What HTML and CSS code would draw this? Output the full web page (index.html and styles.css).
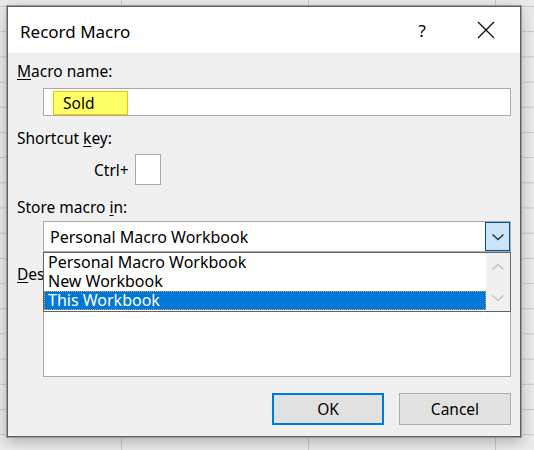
FILE: index.html
```html
<!DOCTYPE html>
<html lang="en">
<head>
  <meta charset="UTF-8">
  <meta name="viewport" content="width=device-width, initial-scale=1.0">
  <title>Record Macro</title>
  <link rel="stylesheet" href="styles.css">
</head>
<body>
  <div class="dialog">
    <div class="titlebar">
      <span class="title">Record Macro</span>
      <span class="help">?</span>
      <svg class="close" width="18" height="18" viewBox="0 0 18 18">
        <path d="M1 1 L17 17 M17 1 L1 17" stroke="#111" stroke-width="1.3" fill="none"/>
      </svg>
    </div>

    <div class="content">
      <label class="lbl"><u>M</u>acro name:</label>
      <div class="field name-field">
        <span class="highlight">Sold</span>
      </div>

      <label class="lbl lbl-gap">Shortcut <u>k</u>ey:</label>
      <div class="shortcut">
        <span>Ctrl+</span>
        <div class="keybox"></div>
      </div>

      <label class="lbl lbl-gap">Store macro <u>i</u>n:</label>
      <div class="combo-wrap">
        <div class="combo">
          <span class="combo-text">Personal Macro Workbook</span>
          <div class="combo-btn">
            <svg width="14" height="10" viewBox="0 0 14 10">
              <path d="M1.5 2.5 L7 7.5 L12.5 2.5" stroke="#333" stroke-width="1.5" fill="none"/>
            </svg>
          </div>
        </div>
        <div class="droplist">
          <ul class="options">
            <li>Personal Macro Workbook</li>
            <li>New Workbook</li>
            <li class="selected">This Workbook</li>
          </ul>
          <div class="scrollbar">
            <svg width="14" height="10" viewBox="0 0 14 10">
              <path d="M1.5 7.5 L7 2.5 L12.5 7.5" stroke="#c4c4c4" stroke-width="1.6" fill="none"/>
            </svg>
            <svg width="14" height="10" viewBox="0 0 14 10">
              <path d="M1.5 2.5 L7 7.5 L12.5 2.5" stroke="#c4c4c4" stroke-width="1.6" fill="none"/>
            </svg>
          </div>
        </div>
      </div>

      <label class="lbl lbl-gap lbl-clipped"><u>D</u>es</label>
      <div class="field description"></div>

      <div class="buttons">
        <button class="btn btn-default">OK</button>
        <button class="btn">Cancel</button>
      </div>
    </div>
  </div>
</body>
</html>
```

FILE: styles.css
```css
body {
  margin: 0;
  width: 534px;
  height: 450px;
  overflow: hidden;
  font-family: "Noto Sans", "Open Sans", sans-serif;
  font-size: 15.5px;
  color: #000;
  background-color: #ebebeb;
  background-image:
    linear-gradient(to right, #c8c8c8 1px, transparent 1px),
    linear-gradient(to bottom, #c8c8c8 1px, transparent 1px);
  background-size: 187px 450px, 534px 25.2px;
  background-position: 121px 0, 0 6px;
  padding: 6px 0 0 7px;
  box-sizing: border-box;
}
.dialog {
  width: 514px;
  height: 431px;
  box-sizing: border-box;
  border: 1px solid #5f5f5f;
  box-shadow: 0 0 0 1px #9a9a9a, 0 4px 14px rgba(0, 0, 0, 0.28);
  background: #f0f0f0;
  display: flex;
  flex-direction: column;
}
.titlebar {
  height: 46px;
  background: #fff;
  display: flex;
  align-items: center;
  padding: 0 0 0 12px;
  flex-shrink: 0;
}
.title {
  font-size: 17px;
  flex: 1;
  margin-top: 2px;
}
.help {
  font-size: 17px;
  margin-right: 51px;
  margin-top: 1px;
}
.close {
  margin-right: 25px;
}
.content {
  padding: 8px 9px 0 9px;
  display: flex;
  flex-direction: column;
}
.lbl {
  display: block;
  line-height: 20px;
  height: 20px;
}
.lbl u {
  text-decoration-thickness: 1px;
  text-underline-offset: 2px;
}
.lbl-gap {
  margin-top: 12px;
}
.field {
  margin: 7px 0 0 26px;
  background: #fff;
  border: 1px solid #a9a9a9;
  box-sizing: border-box;
}
.name-field {
  height: 28px;
  padding: 2px 0 0 9px;
}
.highlight {
  display: inline-block;
  width: 75px;
  height: 24px;
  box-sizing: border-box;
  background: #ffff66;
  border: 1px solid #f5c000;
  line-height: 22px;
  padding-left: 9px;
}
.shortcut {
  display: flex;
  align-items: center;
  margin: 6px 0 0 77px;
  gap: 6px;
}
.keybox {
  width: 26px;
  height: 31px;
  box-sizing: border-box;
  background: #fff;
  border: 1px solid #a9a9a9;
}
.combo-wrap {
  position: relative;
  margin: 4px 0 0 26px;
  font-size: 16px;
}
.combo {
  height: 31px;
  box-sizing: border-box;
  background: #fff;
  border: 1px solid #a9a9a9;
  display: flex;
  align-items: center;
  padding-left: 6px;
}
.combo-text {
  flex: 1;
}
.combo-btn {
  width: 25px;
  height: 29px;
  box-sizing: border-box;
  background: #cce4f7;
  border: 1px solid #005499;
  display: flex;
  align-items: center;
  justify-content: center;
}
.droplist {
  position: absolute;
  top: 31px;
  left: 0;
  right: 0;
  height: 60px;
  box-sizing: border-box;
  background: #fff;
  border: 1px solid #646464;
  display: flex;
  z-index: 1;
}
.options {
  list-style: none;
  margin: 0;
  padding: 0;
  flex: 1;
}
.options li {
  height: 19px;
  line-height: 19px;
  padding-left: 4px;
}
.options li.selected {
  background: #0078d7;
  color: #fff;
  outline: 1px dotted #e0a060;
  outline-offset: -1px;
}
.scrollbar {
  width: 24px;
  background: #f0f0f0;
  display: flex;
  flex-direction: column;
  align-items: center;
  justify-content: space-between;
  padding: 9px 0 8px;
}
.lbl-clipped {
  width: 26px;
  overflow: hidden;
  white-space: nowrap;
}
.description {
  margin-top: 4px;
  height: 89px;
}
.buttons {
  display: flex;
  justify-content: flex-end;
  gap: 15px;
  margin-top: 16px;
}
.btn {
  width: 112px;
  height: 32px;
  box-sizing: border-box;
  background: #e1e1e1;
  border: 1px solid #adadad;
  font-family: inherit;
  font-size: 15.5px;
  color: #000;
  padding: 0;
}
.btn-default {
  border: 2px solid #0078d7;
}
```
